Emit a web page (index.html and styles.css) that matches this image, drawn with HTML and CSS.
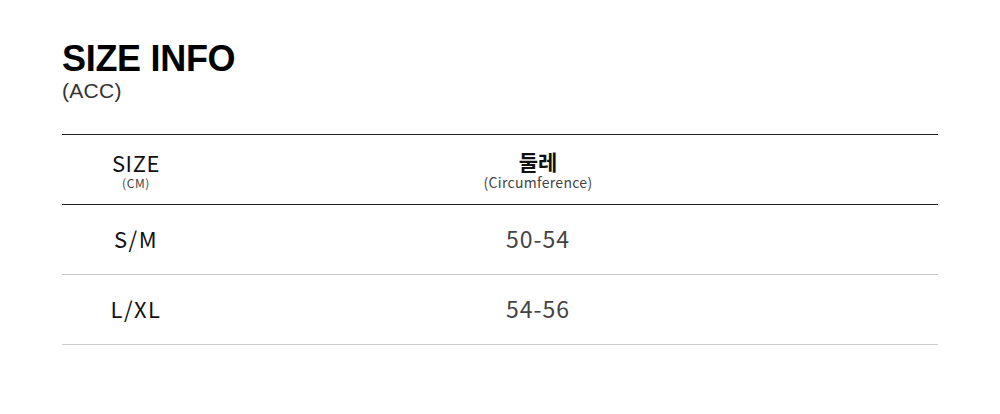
FILE: index.html
```html
<!DOCTYPE html>
<html>
<head>
<meta charset="utf-8">
<link rel="stylesheet" href="styles.css">
</head>
<body>
<div class="page">
  <h1 class="title">SIZE INFO</h1>
  <div class="sub">(ACC)</div>
  <div class="table">
    <div class="row head">
      <div class="cell c1"><span class="h-main">SIZE</span><span class="h-sub">(CM)</span></div>
      <div class="cell c2"><span class="h-main ko">둘레</span><span class="h-sub2">(Circumference)</span></div>
      <div class="cell c3"></div>
    </div>
    <div class="row">
      <div class="cell c1 size">S/M</div>
      <div class="cell c2 val">50-54</div>
      <div class="cell c3"></div>
    </div>
    <div class="row">
      <div class="cell c1 size">L/XL</div>
      <div class="cell c2 val">54-56</div>
      <div class="cell c3"></div>
    </div>
  </div>
</div>
</body>
</html>
```
FILE: styles.css
```css
html, body { margin: 0; padding: 0; background: #fff; }
.page {
  padding: 39px 62px 0 62px;
  font-family: "Liberation Sans", Arial, sans-serif;
}
.title {
  margin: 0;
  font-size: 36px;
  line-height: 40px;
  font-weight: 700;
  color: #000;
  letter-spacing: -0.3px;
}
.sub {
  font-size: 21px;
  line-height: 24px;
  color: #333;
  letter-spacing: 0.3px;
}
.table {
  margin-top: 31px;
  border-top: 1px solid #222;
  font-family: "Noto Sans CJK KR", "Noto Sans", sans-serif;
}
.row {
  display: grid;
  grid-template-columns: 148px 656px 1fr;
  height: 69px;
  border-bottom: 1px solid #ccc;
  align-items: center;
}
.row.head { border-bottom-color: #222; }
.cell {
  display: flex;
  flex-direction: column;
  align-items: center;
  justify-content: center;
}
.row:not(.head) .cell { padding-bottom: 4px; }
.h-main {
  font-size: 22px;
  line-height: 24px;
  color: #111;
  letter-spacing: 0.6px;
}
.h-main.ko { font-weight: 700; font-size: 21px; letter-spacing: 0; }
.h-sub {
  font-size: 12px;
  line-height: 15px;
  color: #444;
  letter-spacing: 0.6px;
  margin-top: 1px;
}
.h-sub2 {
  font-size: 14px;
  line-height: 16px;
  color: #444;
  letter-spacing: 0.3px;
  margin-top: 1px;
}
.size {
  font-size: 22px;
  color: #111;
  letter-spacing: 1.5px;
}
.val {
  font-size: 23px;
  color: #444;
  letter-spacing: 1px;
}
```
